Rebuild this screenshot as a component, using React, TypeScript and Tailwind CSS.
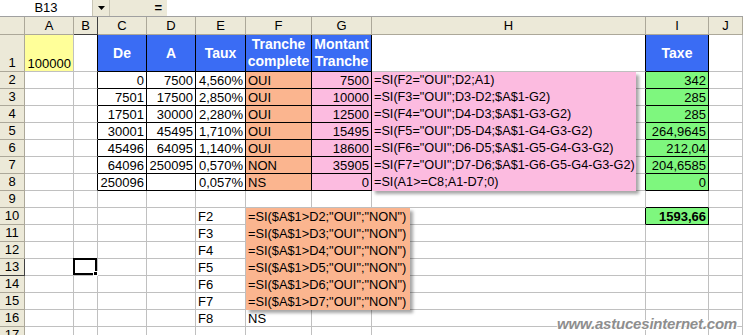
import clsx from "clsx";

type Cell = {
  t?: string;
  a?: "l" | "r" | "c";
  bg?: string;
  bold?: boolean;
  r?: boolean; // black right border
  d?: boolean; // black bottom border
  head?: boolean;
  sel?: boolean;
  shadow?: boolean;
};

const COLS = ["A", "B", "C", "D", "E", "F", "G", "H", "I", "J"];

const BLUE = "bg-[#3a6cf4]";
const ORANGE = "bg-[#fbb58f]";
const PINK = "bg-[#fcbbe0]";
const GREEN = "bg-[#7ef77e]";

const table: [string, string, string, string, string, string][] = [
  ["0", "7500", "4,560%", "OUI", "7500", "342"],
  ["7501", "17500", "2,850%", "OUI", "10000", "285"],
  ["17501", "30000", "2,280%", "OUI", "12500", "285"],
  ["30001", "45495", "1,710%", "OUI", "15495", "264,9645"],
  ["45496", "64095", "1,140%", "OUI", "18600", "212,04"],
  ["64096", "250095", "0,570%", "NON", "35905", "204,6585"],
  ["250096", "", "0,057%", "NS", "0", "0"],
];

const pinkLines = [
  '=SI(F2="OUI";D2;A1)',
  '=SI(F3="OUI";D3-D2;$A$1-G2)',
  '=SI(F4="OUI";D4-D3;$A$1-G3-G2)',
  '=SI(F5="OUI";D5-D4;$A$1-G4-G3-G2)',
  '=SI(F6="OUI";D6-D5;$A$1-G5-G4-G3-G2)',
  '=SI(F7="OUI";D7-D6;$A$1-G6-G5-G4-G3-G2)',
  "=SI(A1>=C8;A1-D7;0)",
];

const orangeLines = [2, 3, 4, 5, 6, 7].map((n) => `=SI($A$1>D${n};"OUI";"NON")`);

function buildRows() {
  const rows: Record<number, Record<string, Cell>> = {};
  for (let r = 1; r <= 17; r++) rows[r] = {};

  rows[1].A = { t: "100000", a: "r", bg: "bg-[#ffff99]" };
  rows[1].B = { r: true };
  rows[1].C = { t: "De", head: true, bg: BLUE, r: true, d: true };
  rows[1].D = { t: "A", head: true, bg: BLUE, r: true, d: true };
  rows[1].E = { t: "Taux", head: true, bg: BLUE, r: true, d: true };
  rows[1].F = { t: "Tranche complete", head: true, bg: BLUE, r: true, d: true };
  rows[1].G = { t: "Montant Tranche", head: true, bg: BLUE, r: true, d: true };
  rows[1].H = { r: true };
  rows[1].I = { t: "Taxe", head: true, bg: BLUE, r: true, d: true };

  table.forEach(([c, d, e, f, g, i], k) => {
    const r = k + 2;
    rows[r].B = { r: true };
    rows[r].C = { t: c, a: "r", r: true, d: true };
    rows[r].D = { t: d, a: "r", r: true, d: true };
    rows[r].E = { t: e, a: "r", r: true, d: true };
    rows[r].F = { t: f, a: "l", bg: ORANGE, r: true, d: true };
    rows[r].G = { t: g, a: "r", bg: PINK, r: true, d: true };
    rows[r].H = { r: true };
    rows[r].I = { t: i, a: "r", bg: GREEN, r: true, d: true };
  });

  rows[9].I = { d: true };
  rows[10].H = { r: true };
  rows[10].I = { t: "1593,66", a: "r", bg: GREEN, bold: true, r: true, d: true, shadow: true };

  for (let n = 2; n <= 8; n++) rows[n + 8].E = { t: `F${n}`, a: "l" };
  rows[16].F = { t: "NS", a: "l" };
  rows[13].B = { sel: true };
  return rows;
}

function SheetCell({ c }: { c: Cell }) {
  return (
    <div
      className={clsx(
        "relative flex border-r border-b px-[2px]",
        c.r ? "border-r-black" : "border-r-[#c0c0c0]",
        c.d ? "border-b-black" : "border-b-[#c0c0c0]",
        c.bg ?? "bg-white",
        c.head
          ? "items-center justify-center text-center text-[14px] font-bold leading-[17px] text-white"
          : "items-end whitespace-nowrap leading-[15px]",
        c.a === "r" && "justify-end",
        c.bold && "font-bold",
        c.shadow && "shadow-[2px_2px_3px_rgba(0,0,0,0.3)]"
      )}
    >
      {c.t}
      {c.sel && (
        <div className="absolute -top-[1px] -left-[1px] right-0 bottom-0 border-2 border-black">
          <div className="absolute -right-[3px] -bottom-[3px] h-[5px] w-[5px] border border-white bg-black" />
        </div>
      )}
    </div>
  );
}

export default function App() {
  const rows = buildRows();
  const rowNums = Array.from({ length: 17 }, (_, i) => i + 1);

  return (
    <div className="relative h-[335px] w-[743px] overflow-hidden bg-white font-['Liberation_Sans',Arial,sans-serif] text-[13px] text-black">
      {/* formula bar */}
      <div className="flex h-[17px] border-b border-[#a0a0a0] text-[13px] leading-[16px]">
        <div className="flex w-[92px] items-center justify-center bg-white">B13</div>
        <div className="flex w-[18px] items-center justify-center border-x border-[#c8c5b5] bg-[#ece9d8]">
          <svg width="7" height="4" viewBox="0 0 7 4">
            <path d="M0 0h7L3.5 4z" fill="#000" />
          </svg>
        </div>
        <div className="flex w-[57px] items-center justify-end bg-[#ece9d8] pr-[5px] font-bold">=</div>
        <div className="flex-1 bg-white" />
      </div>

      {/* sheet */}
      <div className="relative">
        <div className="grid grid-cols-[25px_49px_24px_49px_49px_50px_66px_60px_274px_63px_1fr] grid-rows-[18px_37px_repeat(16,17px)]">
          <div className="border-r border-b border-[#aca899] bg-[#ece9d8]" />
          {COLS.map((col) => (
            <div
              key={col}
              className={clsx(
                "flex items-center justify-center border-r border-b bg-[#ece9d8] leading-[16px]",
                col === "B" ? "border-r-[#404040] border-b-[#404040] bg-[#e2dfcc]" : "border-[#aca899]"
              )}
            >
              {col}
            </div>
          ))}

          {rowNums.map((r) => (
            <div key={r} className="contents">
              <div
                className={clsx(
                  "flex justify-center border-r border-b bg-[#ece9d8] leading-[16px]",
                  r === 1 ? "items-end" : "items-center",
                  r === 13 ? "border-r-[#404040] border-b-[#404040] bg-[#e2dfcc]" : "border-[#aca899]"
                )}
              >
                {r}
              </div>
              {COLS.map((col) => (
                <SheetCell key={col} c={rows[r][col] ?? {}} />
              ))}
            </div>
          ))}
        </div>

        {/* pink text box over column H */}
        <div className="absolute left-[372px] top-[55px] h-[119px] w-[264px] bg-[#fcbbe0] px-[2px] text-[12.7px] leading-[17px] shadow-[3px_3px_3px_rgba(0,0,0,0.35)]">
          {pinkLines.map((l) => (
            <div key={l} className="h-[17px] whitespace-nowrap">
              {l}
            </div>
          ))}
        </div>

        {/* orange text box */}
        <div className="absolute left-[246px] top-[191px] h-[102px] w-[164px] bg-[#fbb58f] px-[2px] text-[12.8px] leading-[17px] shadow-[3px_3px_3px_rgba(0,0,0,0.35)]">
          {orangeLines.map((l) => (
            <div key={l} className="h-[17px] whitespace-nowrap">
              {l}
            </div>
          ))}
        </div>
      </div>

      <div className="absolute right-[6px] bottom-[2px] text-[15px] leading-[18px] font-bold italic tracking-[-0.2px] text-[#8e8e8e] [text-shadow:1px_1px_0_#fff,-1px_-1px_0_#fff]">
        www.astucesinternet.com
      </div>
    </div>
  );
}
